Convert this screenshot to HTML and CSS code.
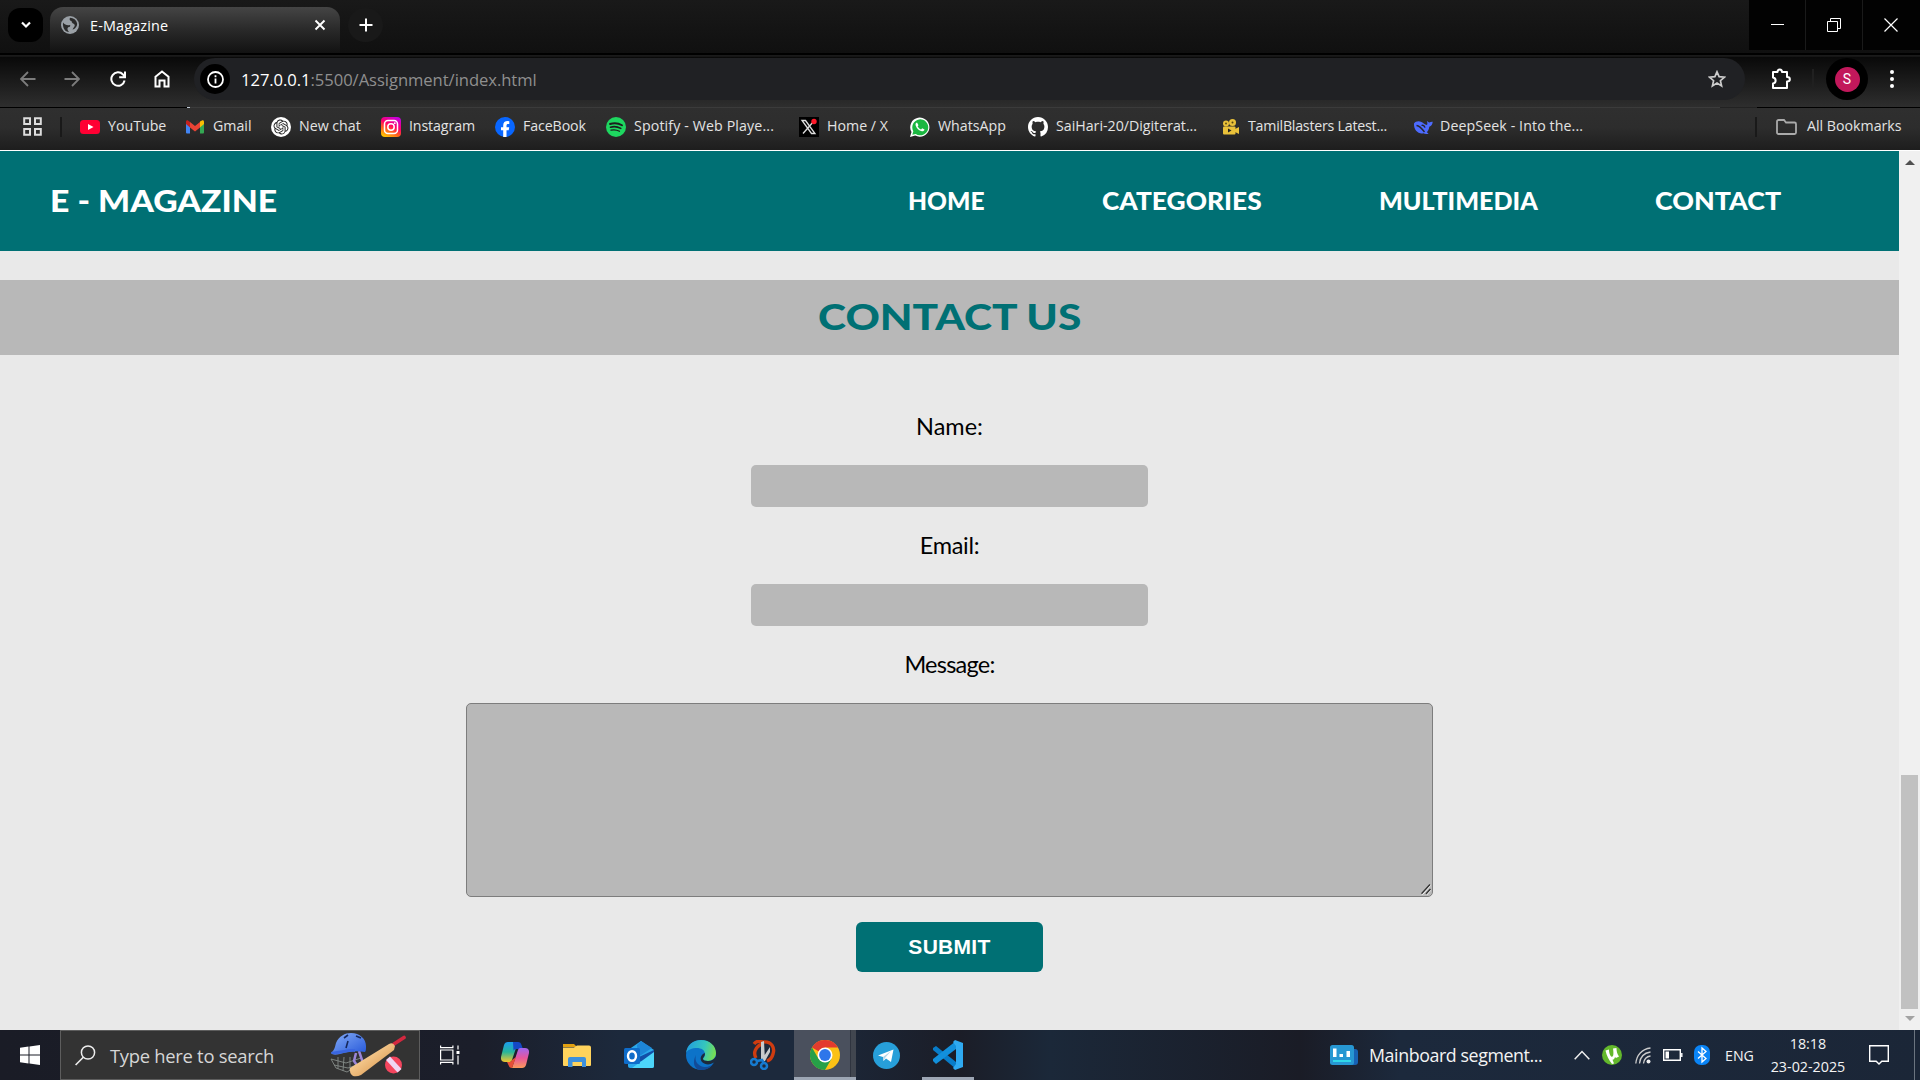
FILE: index.html
```html
<!DOCTYPE html>
<html lang="en">
<head>
<meta charset="utf-8">
<title>E-Magazine</title>
<link rel="stylesheet" href="styles.css">
</head>
<body>
<div class="screen">
  <div class="tabstrip">
    <div class="tab-search"><svg width="14" height="14" viewBox="0 0 14 14"><path d="M3 4.500l4 4 4-4" fill="none" stroke="#fff" stroke-width="2.200"/></svg></div>
    <div class="tab">
      <svg width="18" height="18" viewBox="0 0 18 18"><circle cx="9" cy="9" r="9" fill="#9aa0a6"/><path d="M2 6.500c2 2.500 4 3 7 2.500 1 1.500-1 2-2 2.500s-.500 3 1 4.500C4 16 1.500 12 2 6.500zM9 1.800c-1 2 0 3 1.500 3.200 0 2 2 2.500 3 3.500 1 1.500-1 3-2 5 3-.500 5-4 4.600-6C15.500 4 12.500 2 9 1.800z" fill="#2b2b2b"/></svg>
      <span class="tab-title">E-Magazine</span>
      <svg class="tab-close" width="12" height="12" viewBox="0 0 12 12"><path d="M1.500 1.500l9 9m0-9l-9 9" stroke="#fff" stroke-width="1.900"/></svg>
    </div>
    <div class="new-tab"><svg width="14" height="14" viewBox="0 0 14 14"><path d="M7 .5v13M.5 7h13" stroke="#fff" stroke-width="2"/></svg></div>
    <div class="window-controls">
      <div><svg width="13" height="13" viewBox="0 0 13 13"><path d="M0 5.500h13" stroke="#fff"/></svg></div>
      <div><svg width="14" height="14" viewBox="0 0 14 14"><path d="M.5 3.500h10v10H.5zM3.500 3V.5h10v10H11" fill="none" stroke="#fff"/></svg></div>
      <div><svg width="14" height="14" viewBox="0 0 14 14"><path d="M.5.5l13 13m0-13l-13 13" stroke="#fff" stroke-width="1.200"/></svg></div>
    </div>
  </div>

  <div class="toolbar">
    <div class="nav-btn"><svg width="16" height="16" viewBox="0 0 16 16" fill="none" stroke="#7c7c7c" stroke-width="1.800"><path d="M15.500 8H1.500M8 1L1 8l7 7"/></svg></div>
    <div class="nav-btn"><svg width="16" height="16" viewBox="0 0 16 16" fill="none" stroke="#7c7c7c" stroke-width="1.800"><path d="M.5 8h14M8 1l7 7-7 7"/></svg></div>
    <div class="nav-btn"><svg width="16" height="16" viewBox="0 0 16 16" fill="none" stroke="#fff" stroke-width="2"><path d="M14.600 9.500A6.700 6.700 0 1 1 13 3.500L14.500 5M15 .5v5.800H9.200"/></svg></div>
    <div class="nav-btn"><svg width="16" height="18" viewBox="0 0 16 18" fill="none" stroke="#fff" stroke-width="2"><path d="M1.500 6.800L8 1.500l6.500 5.300V16.500H10.500V10.500h-5v6h-4z"/></svg></div>
    <div class="omnibox">
      <div class="site-info"><svg width="17" height="17" viewBox="0 0 17 17"><circle cx="8.500" cy="8.500" r="7.500" fill="none" stroke="#fff" stroke-width="1.800"/><path d="M8.500 7.500v5M8.500 4.300v2" stroke="#fff" stroke-width="1.800"/></svg></div>
      <div class="url"><b>127.0.0.1</b>:5500/Assignment/index.html</div>
      <svg class="star" width="18" height="18" viewBox="0 0 18 18"><path d="M9 1.800l2.100 4.900 5.300.5-4 3.500 1.200 5.200L9 13.100l-4.600 2.800 1.200-5.200-4-3.500 5.300-.5z" fill="none" stroke="#ccc" stroke-width="1.700"/></svg>
    </div>
    <div class="tool-right">
      <svg class="ext" width="22" height="22" viewBox="0 0 22 22"><path d="M3 4h4.500c0-3.500 4.500-3.500 4.500 0H17v5c3.800 0 3.800 4.500 0 4.500V20H3v-4.500c3.500-.5 3.500-5.500 0-6z" fill="none" stroke="#fff" stroke-width="2" stroke-linejoin="round"/></svg>
      <i class="divider"></i>
      <div class="profile"><span>S</span></div>
      <svg class="menu" width="4" height="18" viewBox="0 0 4 18" fill="#fff"><circle cx="2" cy="2" r="2"/><circle cx="2" cy="9" r="2"/><circle cx="2" cy="16" r="2"/></svg>
    </div>
  </div>

  <div class="bookmarks">
    <svg class="apps" width="19" height="19" viewBox="0 0 19 19"><path d="M1.200 1.200H7V7H1.200zM12 1.200h5.800V7H12zM1.200 12H7v5.800H1.200zM12 12h5.800v5.800H12z" fill="none" stroke="#ddd" stroke-width="2"/></svg>
    <i class="bar"></i>
    <div class="bm-list">
      <div class="bm"><svg viewBox="0 0 20 20"><rect y="3" width="20" height="14" rx="3.500" fill="#ff0033"/><path d="M8 7l5.500 3L8 13z" fill="#fff"/></svg><span>YouTube</span></div>
      <div class="bm"><svg viewBox="0 0 20 20"><path d="M1 6v9.500a1 1 0 0 0 1 1h3V8z" fill="#4285f4"/><path d="M15 8v8.500h3a1 1 0 0 0 1-1V6z" fill="#34a853"/><path d="M15 4.500L17 3.500c1-.5 2 .2 2 1.500v2l-4 3.500z" fill="#fbbc04"/><path d="M5 5l5 4 5-4v5.500l-5 4-5-4z" fill="#ea4335"/><path d="M1 7V5c0-1.300 1-2 2-1.500L5 5v5.500z" fill="#c5221f"/></svg><span>Gmail</span></div>
      <div class="bm"><svg viewBox="0 0 20 20"><circle cx="10" cy="10" r="10" fill="#fff"/><path transform="translate(2.500 2.500) scale(.625)" fill="#222" d="M22.2819 9.8211a5.9847 5.9847 0 0 0-.5157-4.9108 6.0462 6.0462 0 0 0-6.5098-2.9A6.0651 6.0651 0 0 0 4.9807 4.1818a5.9847 5.9847 0 0 0-3.9977 2.9 6.0462 6.0462 0 0 0 .7427 7.0966 5.98 5.98 0 0 0 .511 4.9107 6.051 6.051 0 0 0 6.5146 2.9001A5.9847 5.9847 0 0 0 13.2599 24a6.0557 6.0557 0 0 0 5.7718-4.2058 5.9894 5.9894 0 0 0 3.9977-2.9001 6.0557 6.0557 0 0 0-.7475-7.0729zm-9.022 12.6081a4.4755 4.4755 0 0 1-2.8764-1.0408l.1419-.0804 4.7783-2.7582a.7948.7948 0 0 0 .3927-.6813v-6.7369l2.02 1.1686a.071.071 0 0 1 .038.052v5.5826a4.504 4.504 0 0 1-4.4945 4.4944zm-9.6607-4.1254a4.4708 4.4708 0 0 1-.5346-3.0137l.142.0852 4.783 2.7582a.7712.7712 0 0 0 .7806 0l5.8428-3.3685v2.3324a.0804.0804 0 0 1-.0332.0615L9.74 19.9502a4.4992 4.4992 0 0 1-6.1408-1.6464zM2.3408 7.8956a4.485 4.485 0 0 1 2.3655-1.9728V11.6a.7664.7664 0 0 0 .3879.6765l5.8144 3.3543-2.0201 1.1685a.0757.0757 0 0 1-.071 0l-4.8303-2.7865A4.504 4.504 0 0 1 2.3408 7.872zm16.5963 3.8558L13.1038 8.364 15.1192 7.2a.0757.0757 0 0 1 .071 0l4.8303 2.7913a4.4944 4.4944 0 0 1-.6765 8.1042v-5.6772a.79.79 0 0 0-.407-.667zm2.0107-3.0231l-.142-.0852-4.7735-2.7818a.7759.7759 0 0 0-.7854 0L9.409 9.2297V6.8974a.0662.0662 0 0 1 .0284-.0615l4.8303-2.7866a4.4992 4.4992 0 0 1 6.6802 4.66zM8.3065 12.863l-2.02-1.1638a.0804.0804 0 0 1-.038-.0567V6.0742a4.4992 4.4992 0 0 1 7.3757-3.4537l-.142.0805L8.704 5.459a.7948.7948 0 0 0-.3927.6813zm1.0976-2.3654l2.602-1.4998 2.6069 1.4998v2.9994l-2.5974 1.4997-2.6067-1.4997Z"/></svg><span>New chat</span></div>
      <div class="bm"><svg viewBox="0 0 20 20"><defs><linearGradient id="ig" x1="0.200" y1="1" x2="0.700" y2="0"><stop offset="0" stop-color="#ffc800"/><stop offset=".35" stop-color="#ff5a20"/><stop offset=".6" stop-color="#ff0169"/><stop offset="1" stop-color="#c800dc"/></linearGradient></defs><rect width="20" height="20" rx="4" fill="url(#ig)"/><g fill="none" stroke="#fff" stroke-width="1.500"><rect x="3.500" y="3.500" width="13" height="13" rx="3.500"/><circle cx="10" cy="10" r="3.200"/></g><circle cx="13.800" cy="6.200" r=".9" fill="#fff"/></svg><span>Instagram</span></div>
      <div class="bm"><svg viewBox="0 0 20 20"><circle cx="10" cy="10" r="10" fill="#0866ff"/><path d="M8.200 20v-6.700H6V10.200h2.200V8.800c0-3.300 1.600-4.700 4.600-4.700l1.500.2v2.800h-1.100c-1.300 0-1.700.5-1.700 1.700v1.400h2.700l-.5 3.100h-2.200V20z" fill="#fff"/></svg><span>FaceBook</span></div>
      <div class="bm"><svg viewBox="0 0 20 20"><circle cx="10" cy="10" r="10" fill="#1ed760"/><g fill="none" stroke="#1d1d1d" stroke-linecap="round"><path d="M4 7c4-1.200 8.500-.8 12 1.200" stroke-width="1.900"/><path d="M4.500 10.200c3.500-1 7-.6 10.300 1.200" stroke-width="1.600"/><path d="M5 13.200c3-.7 5.800-.4 8.500 1.100" stroke-width="1.300"/></g></svg><span>Spotify - Web Playe...</span></div>
      <div class="bm"><svg viewBox="0 0 20 20"><rect width="20" height="20" fill="#000"/><path d="M3 3.500h3.500l9.500 13h-3.500zM15 4L4 16.500" fill="none" stroke="#ddd" stroke-width="1.300"/><circle cx="15" cy="4.500" r="2.700" fill="#ff1a2a"/></svg><span>Home / X</span></div>
      <div class="bm"><svg viewBox="0 0 20 20"><path d="M0 20l1.500-5A9.600 9.600 0 1 1 5.200 18.600z" fill="#fff"/><path d="M2.300 17.800l1-3.500A8 8 0 1 1 5.800 17z" fill="#1bb741"/><path d="M7 5.500c-1.200.4-1.700 1.600-1.300 3 .8 2.800 3.200 5.200 6.100 5.800 1.300.2 2.500-.5 2.700-1.800l-2.300-1.200-1.100 1.200c-1.600-.6-2.800-1.700-3.500-3.300l.9-1z" fill="#fff"/></svg><span>WhatsApp</span></div>
      <div class="bm"><svg viewBox="0 0 16 16"><path fill="#fff" d="M8 0C3.580 0 0 3.580 0 8c0 3.540 2.290 6.530 5.470 7.590.4.070.55-.17.55-.38 0-.19-.01-.82-.01-1.490-2.010.37-2.530-.49-2.690-.94-.09-.23-.48-.94-.82-1.130-.28-.15-.68-.52-.01-.53.63-.01 1.080.58 1.230.82.72 1.210 1.870.87 2.330.66.070-.52.280-.87.510-1.070-1.780-.2-3.640-.89-3.640-3.950 0-.87.310-1.590.82-2.150-.08-.2-.36-1.020.080-2.120 0 0 .67-.21 2.200.82.640-.18 1.320-.27 2-.27s1.360.090 2 .27c1.530-1.040 2.200-.82 2.200-.82.440 1.100.16 1.920.080 2.120.51.560.82 1.270.82 2.150 0 3.070-1.870 3.750-3.650 3.950.29.250.54.730.54 1.480 0 1.070-.01 1.930-.01 2.200 0 .21.15.46.55.38A8.010 8.010 0 0 0 16 8c0-4.420-3.580-8-8-8z"/></svg><span>SaiHari-20/Digiterat...</span></div>
      <div class="bm"><svg viewBox="0 0 20 20"><g fill="#e9c13a"><circle cx="6" cy="6.500" r="3"/><circle cx="12.500" cy="5.500" r="3.500"/><rect x="3" y="9.500" width="12.500" height="8" rx="1"/><path d="M15 12l4-2v7l-4-2z"/></g><path d="M8 11.500l3.500 2L8 15.500z" fill="#222"/><circle cx="12.500" cy="5.500" r="1" fill="#554410"/><circle cx="6" cy="6.500" r=".9" fill="#554410"/></svg><span>TamilBlasters Latest...</span></div>
      <div class="bm"><svg viewBox="0 0 20 20"><path d="M1 6.500c1.500-2.500 5-2.700 7.500-1.500 2 .9 3 2.700 5.500 3 .8-1.200.2-2.800-.2-4.300 1.200 1 1.800 1.500 2.600 1.700 1-.2 2-.8 3.300-.6-.2 2.700-1.300 4.300-3.400 5-.3 2.500-1.300 4.200-2.500 5.400l1.800 1.300c-2 1-3.700.6-5.300-.2C5.500 17.500.5 13 1 6.500z" fill="#4d6bfe"/><path d="M3.500 8.500c3 .3 5 2.500 8 6.500M8.500 8.500c1.500-.8 3 .3 3.500 2.200" stroke="#26272c" stroke-width="1.300" fill="none"/></svg><span>DeepSeek - Into the...</span></div>
    </div>
    <i class="bar"></i>
    <div class="all-bm"><svg width="21" height="16" viewBox="0 0 21 16"><path d="M1 2.500A1.500 1.500 0 0 1 2.500 1H8l2 2.500h8.500A1.500 1.500 0 0 1 20 5v8.500a1.500 1.500 0 0 1-1.500 1.500h-16A1.500 1.500 0 0 1 1 13.500z" fill="none" stroke="#aaa" stroke-width="1.800"/></svg><span>All Bookmarks</span></div>
  </div>

  <div class="viewport">
    <div class="page">
      <header class="site-header">
        <div class="brand">E - MAGAZINE</div>
        <nav class="site-nav">
          <a class="nav-home"><span>HOME</span></a>
          <a class="nav-categories"><span>CATEGORIES</span></a>
          <a class="nav-multimedia"><span>MULTIMEDIA</span></a>
          <a class="nav-contact"><span>CONTACT</span></a>
        </nav>
      </header>
      <h1 class="section-title"><span>CONTACT US</span></h1>
      <form class="contact-form">
        <label class="label-name">Name:</label>
        <div class="field"></div>
        <label class="label-email">Email:</label>
        <div class="field"></div>
        <label class="label-message">Message:</label>
        <div class="message"><svg width="10" height="11" viewBox="0 0 10 11"><path d="M1 10.500L9.500 1M5.500 10.500l4-4.500" stroke="#fff" stroke-width="1.500"/><path d="M.5 9.800L9 .5M5 10l4.500-5" stroke="#333" stroke-width="1.500"/></svg></div>
        <div class="submit">SUBMIT</div>
      </form>
    </div>
    <div class="scrollbar">
      <svg width="10" height="5" viewBox="0 0 10 5"><path d="M0 5l5-5 5 5z" fill="#505050"/></svg>
      <div class="thumb"></div>
      <svg width="10" height="5" viewBox="0 0 10 5"><path d="M0 0l5 5 5-5z" fill="#a3a3a3"/></svg>
    </div>
  </div>

  <div class="taskbar">
    <div class="start"><svg width="20" height="20" viewBox="0 0 20 20" fill="#fff"><path d="M0 2.700L8.500 1.500V9.500H0zM9.500 1.400L20 0v9.500H9.500zM0 10.500h8.500v8L0 17.300zM9.500 10.500H20V20L9.500 18.600z"/></svg></div>
    <div class="search">
      <svg width="21" height="21" viewBox="0 0 21 21"><circle cx="13" cy="7.500" r="6.600" fill="none" stroke="#eee" stroke-width="1.500"/><path d="M8.300 12.200L.6 20" stroke="#eee" stroke-width="1.600"/></svg>
      <span>Type here to search</span>
      <svg class="cricket" width="76" height="44" viewBox="0 0 76 44">
        <defs><linearGradient id="hel" x1="0" x2="1" y2="1"><stop offset="0" stop-color="#86aef8"/><stop offset="1" stop-color="#2456d8"/></linearGradient><linearGradient id="bat" x1="0" y1="0" x2="1" y2="1"><stop offset=".3" stop-color="#f9d096"/><stop offset="1" stop-color="#cf873c"/></linearGradient></defs>
        <path d="M1 26l5 9 11 4 12-7M1 26l15 4 15-5M4 32l14 3 12-4M8 24v12M14 24l-1 14M20 24v14" fill="none" stroke="#858b88" stroke-width=".9"/>
        <path d="M29 18l4 12M26 20l-2 8 4 6" stroke="#9b86d8" stroke-width="2.500" fill="none"/>
        <path d="M1 20C5 17 5 13 6 10 9 3 15 0 21 0c9 0 15 6 15 13 0 3 0 5-1 6-10-2-18 0-25 2-4 1-8 1-9-1z" fill="url(#hel)"/>
        <path d="M1 19c8-1 15-3 24-3v3C17 18 9 22 2 21z" fill="#3a66e0"/><path d="M14 5l4-3M26 3l5 2M16 15l2-7" stroke="#15285c" stroke-width="1.600"/>
        <path d="M64 11L74 4.500" stroke="#d3283f" stroke-width="3.600" stroke-linecap="round"/>
        <path d="M20 35L59 11q4-2 6 2l-1 4L31 42q-4 2-8 1-4-3-3-8z" fill="url(#bat)"/>
        <circle cx="63.500" cy="32" r="8.500" fill="#f4455e"/><path d="M56 27l4-3.500L71.500 36l-4 3.500z" fill="#efd5f4"/>
      </svg>
    </div>
    <div class="task-view"><svg width="20" height="20" viewBox="0 0 20 20" fill="none" stroke="#fff" stroke-width="1.200"><path d="M.6 5h12.300v10H.6zM.6 .5V2.600h12.300V.5M.6 19.500v-2.100h12.300v2.100M18 .5v4M18 10.500v9"/><path d="M16.500 6h3v3h-3z" fill="#fff" stroke="none"/></svg></div>
    <div class="pins">
      <div class="pin"><svg width="28" height="26" viewBox="0 0 28 26"><defs><linearGradient id="c1" x2="0" y2="1"><stop offset="0" stop-color="#1b9cf0"/><stop offset=".5" stop-color="#26b59a"/><stop offset="1" stop-color="#f4c72c"/></linearGradient><linearGradient id="c2" x2="0" y2="1"><stop offset="0" stop-color="#a066f0"/><stop offset=".5" stop-color="#e8569b"/><stop offset="1" stop-color="#fb9a5a"/></linearGradient></defs><path d="M7 0h10L11 18c-.5 1.500-1.500 2-3 2H4c-3 0-4.500-2-4-5L3 3c.6-2 2-3 4-3z" fill="url(#c1)"/><path d="M12 0h5c2 0 3 1 3.500 3L22 7h-6c-2 0-3 .5-3.500 2z" fill="#1548c5"/><path d="M21 26H11L17 8c.5-1.500 1.500-2 3-2h4c3 0 4.500 2 4 5l-3 12c-.6 2-2 3-4 3z" fill="url(#c2)"/><path d="M6 20h2c1.500 0 2.500-.5 3-2l4-3-4 11c-2 0-3-1-3.500-3z" fill="#e64f37"/></svg></div>
      <div class="pin"><svg width="28" height="24" viewBox="0 0 28 24"><path d="M0 1h11l3 3H0z" fill="#e2a011"/><path d="M0 4.500h11L14 2.500h12a2 2 0 0 1 2 2V22a1 1 0 0 1-1 1H1a1 1 0 0 1-1-1z" fill="#ffd35c"/><path d="M5 24v-8a2 2 0 0 1 2-2h14a2 2 0 0 1 2 2v8h-4v-5h-9.500v5z" fill="#3e90dc"/></svg></div>
      <div class="pin"><svg width="30" height="28" viewBox="0 0 30 28"><path d="M4 9L17 0l13 9v16a2 2 0 0 1-2 2H6a2 2 0 0 1-2-2z" fill="#2aa7ea"/><path d="M13 4l4-4 11 7-14 9z" fill="#1d86d8"/><path d="M30 9v8L15 21v-5z" fill="#124fa8"/><path d="M30 11v14a2 2 0 0 1-2 2H8z" fill="#4cd5fa"/><rect y="7" width="16" height="16" rx="1.500" fill="#0f6cc9"/><ellipse cx="8" cy="15" rx="4" ry="4.800" fill="none" stroke="#fff" stroke-width="2.400"/></svg></div>
      <div class="pin"><svg width="30" height="30" viewBox="0 0 30 30"><defs><linearGradient id="e1" x1="0" y1=".3" x2="1" y2=".5"><stop offset="0" stop-color="#229ee0"/><stop offset=".6" stop-color="#35c6bd"/><stop offset="1" stop-color="#78df51"/></linearGradient></defs><circle cx="15" cy="15" r="15" fill="#0c73c9"/><path d="M0 13C1 5 7 0 15 0c9 0 15 6 15 13 0 5-4 8-8 8-3 0-5-1-5-2s2-2 2-5c0-4-4-6-8-6C6 8 1 10 0 13z" fill="url(#e1)"/><path d="M10 15c-2 6 2 11 8 12 4 .5 7-1 9.500-3.500C24 29 19 30 15 30 8 30 6 22 10 15z" fill="#124b98"/><path d="M18.800 13c.6 3-1.800 4-1.800 6 0 1.200 2 2 5 2 4 0 6-2 8-4.500V22l-3 1c-3 2-8 2-11-1-2.500-3-1.500-7 2.800-9z" fill="#1d2a3c"/></svg></div>
      <div class="pin"><svg width="26" height="30" viewBox="0 0 26 30"><path d="M4 4c2-3 6-3 9-2 9-1 12 6 10 12-1 4-3 6-6 7M13 3C5 7 3 13 6 18" fill="none" stroke="#cf3c10" stroke-width="3.400"/><path d="M11 2l3-1 1 20h-4zM14 16l6-9v5l-5 9z" fill="#c7cacc"/><g fill="none" stroke="#167bd0" stroke-width="2.500"><circle cx="4" cy="22" r="3"/><circle cx="14" cy="26" r="3"/><path d="M7 21l5-1 2 3"/></g></svg></div>
      <div class="pin active"><svg width="30" height="30" viewBox="0 0 30 30"><circle cx="15" cy="15" r="15" fill="#fbc116"/><path d="M15 15L2 7.500A15 15 0 0 1 28 7.500H15z" fill="#e33b2e"/><path d="M2 7.500A15 15 0 0 0 15 30l6.500-11.300L8.500 18.700z" fill="#26a048"/><circle cx="15" cy="15" r="7.500" fill="#fff"/><circle cx="15" cy="15" r="5.900" fill="#2e76ea"/></svg></div>
      <div class="pin"><svg width="27" height="27" viewBox="0 0 27 27"><circle cx="13.500" cy="13.500" r="13.500" fill="#279fd9"/><path d="M5 13.500L20.500 7.500 18 20l-5-3.500-2.500 2.500-.5-4z" fill="#fff"/><path d="M10 15l8-6-6 7-1.500 3z" fill="#b5d7e9"/></svg></div>
      <div class="pin running"><svg width="30" height="30" viewBox="0 0 30 30"><path d="M0 8l3-2 20 16v7L0 10z" fill="#087cc8"/><path d="M0 21l3 3L23 9V1L0 19z" fill="#1290dc"/><path d="M22 0l8 3v24l-8 3-2-2 3-4V6l-3-4z" fill="#2faaf1"/></svg></div>
    </div>
    <div class="tray">
      <div class="news"><svg width="28" height="21" viewBox="0 0 28 21"><rect x="18" y="4" width="10" height="16" rx="3" fill="#1762b4"/><rect width="24" height="20" rx="2.500" fill="#2797d2"/><path d="M3 3.500h3.500V12H3zM9.500 9H13v3H9.500zM16.500 6H20v6h-3.500z" fill="#fff"/><path d="M3 15h18v2H3z" fill="#30d8e8"/></svg><span>Mainboard segment...</span></div>
      <svg class="chev" width="16" height="10" viewBox="0 0 16 10"><path d="M.7 9.200L8 1.500l7.300 7.700" fill="none" stroke="#eee" stroke-width="1.500"/></svg>
      <svg class="ut" width="20" height="20" viewBox="0 0 20 20"><circle cx="10" cy="10" r="10" fill="#63b82c"/><path d="M3.500 5.500L7 4.500c0 3 1 6.500 2.800 7.300C12 12 11.500 7 11 3.500l3.500-.5c0 3 .5 6 2.500 8.500l-3 1.500-1-1c-.3 1.500-1 2.500-2.500 2.700L12 18.500l-2 .5C7 15 4.500 10.500 3.500 5.500z" fill="#fff"/></svg>
      <svg class="wifi" width="16" height="17" viewBox="0 0 16 17"><g fill="none" stroke="#ccc" stroke-width="1.300"><path d="M.8 16.500C1.500 8 7 2 15.500 1M4.500 16.500C5 10.500 9 6 15.500 5M8.500 16.500c.5-4 3-7 7-7.500"/></g><circle cx="13.500" cy="14.500" r="2" fill="#eee"/></svg>
      <svg class="batt" width="20" height="12" viewBox="0 0 20 12"><path d="M.7.700h16.600v10.600H.7zM18.800 4v4" fill="none" stroke="#fff" stroke-width="1.400"/><path d="M2.500 2.500H6v7H2.500z" fill="#fff"/></svg>
      <svg class="bt" width="16" height="20" viewBox="0 0 16 20"><rect width="16" height="20" rx="7" fill="#0a84f5"/><path d="M4 6.500l8 7L8 17V3l4 3.500-8 7" fill="none" stroke="#fff" stroke-width="1.300"/></svg>
      <span class="lang">ENG</span>
      <div class="clock"><span>18:18</span><span>23-02-2025</span></div>
      <svg class="notif" width="20" height="20" viewBox="0 0 20 20"><path d="M.7.700h18.600v15.600h-6.500L10 19l-2.800-2.700H.7z" fill="none" stroke="#fff" stroke-width="1.400"/></svg>
    </div>
  </div>
</div>
</body>
</html>
```
FILE: styles.css
```css
* { box-sizing: border-box; }
body { margin: 0; background: #111; font-family: "Open Sans", "Noto Sans", sans-serif; }
svg { display: block; flex: none; }
.screen { width: 1920px; height: 1080px; display: flex; flex-direction: column; overflow: hidden; }

/* Browser tabs */
.tabstrip { height: 57px; display: flex; align-items: flex-start; padding-left: 8px; background: linear-gradient(#191919, #101010 53px, #000 53px, #000 55px, #1c1c1c 55px, #141414); }
.tab-search { width: 35px; height: 34px; margin-top: 8px; border-radius: 12px; background: #000; display: flex; align-items: center; justify-content: center; }
.tab { width: 290px; height: 46px; margin: 7px 0 0 7px; padding: 0 14px 10px 11px; border-radius: 13px 13px 0 0; background: linear-gradient(#454545, #292929 50%, #121212); display: flex; align-items: center; }
.tab-title { margin-left: 11px; font-size: 14.400px; letter-spacing: .15px; color: #fff; }
.tab-close { margin-left: auto; }
.new-tab { width: 35px; height: 34px; margin: 8px 0 0 8px; border-radius: 17px; background: #191919; display: flex; align-items: center; justify-content: center; }
.window-controls { margin-left: auto; display: flex; gap: 1px; background: #1a1a1a; }
.window-controls div { width: 56px; height: 50px; background: #020202; display: flex; align-items: center; justify-content: center; }
.window-controls div:last-child { width: 57px; padding-right: 1px; }

/* Address bar */
.toolbar { height: 50px; display: flex; align-items: flex-start; padding: 1px 0 0 6px; background: linear-gradient(#090909, #2e2e2e); }
.nav-btn { width: 44px; height: 42px; display: flex; align-items: center; justify-content: center; }
.nav-btn:nth-child(3) { margin-left: 2px; }
.omnibox { width: 1551px; height: 42px; margin-left: 10px; padding: 0 19px 0 6px; border-radius: 21px; background: #202124; display: flex; align-items: center; }
.site-info { width: 30px; height: 30px; border-radius: 50%; background: #000; display: flex; align-items: center; justify-content: center; }
.url { margin-left: 11px; font-size: 16.600px; letter-spacing: -.05px; color: #8f8f8f; }
.url b { font-weight: 400; color: #fff; }
.star { margin-left: auto; }
.tool-right { height: 42px; display: flex; align-items: center; }
.ext { margin-left: 25px; }
.divider { width: 2px; height: 20px; margin-left: 20px; background: #202020; }
.profile { width: 42px; height: 42px; margin-left: 12px; border-radius: 50%; background: #000; display: flex; align-items: center; justify-content: center; }
.profile span { width: 25px; height: 25px; border-radius: 50%; background: #c2185b; color: #fff; font: 14px/25px "Roboto", sans-serif; text-align: center; }
.menu { margin-left: 22px; }

/* Bookmarks */
.bookmarks { height: 44px; padding: 0 18px 6px 23px; display: flex; align-items: center; border-top: 1px solid #3a3a3a; border-image: linear-gradient(90deg, #000 188px, #c3cdd8 188px, #c3cdd8 191px, #3b3b3b 191px, #3b3b3b 1719px, #222 1719px, #222 1756px, #000 1756px) 1; background: linear-gradient(#2f2f2f, #2d2d2d 45%, #1d1d1d); box-shadow: inset 0 -1px #fff; color: #e3e3e3; font-size: 14.200px; white-space: nowrap; }
.bookmarks span { margin-top: -2px; }
.apps { margin-right: 18px; }
.bar { width: 2px; height: 20px; background: #191919; }
.bm-list { display: flex; margin-left: 18px; width: 1675px; }
.bm { display: flex; align-items: center; gap: 8px; }
.bm svg { width: 20px; height: 20px; }
.bm:nth-child(1) { width: 105px; }
.bm:nth-child(2) { width: 86px; }
.bm:nth-child(3) { width: 110px; }
.bm:nth-child(4) { width: 114px; letter-spacing: -.1px; }
.bm:nth-child(5) { width: 111px; letter-spacing: -.1px; }
.bm:nth-child(6) { width: 193px; letter-spacing: .13px; }
.bm:nth-child(7) { width: 111px; }
.bm:nth-child(8) { width: 118px; }
.bm:nth-child(9) { width: 192px; }
.bm:nth-child(10) { width: 193px; letter-spacing: -.22px; }
.bm:nth-child(11) { gap: 7px; letter-spacing: .1px; }
.all-bm { display: flex; align-items: center; gap: 10px; margin-left: 19px; }

/* Web page */
.viewport { height: 879px; display: flex; }
.page { width: 1899px; background: #e9e9e9; font-family: "Lato", "Liberation Sans", sans-serif; }
.site-header { height: 100px; padding: 0 118px 2px 50px; background: #007074; color: #fff; display: flex; align-items: center; justify-content: space-between; }
.brand { font-size: 29.500px; font-weight: 900; transform: scaleX(1.145); transform-origin: left; }
.site-nav { display: flex; gap: 117.500px; font-size: 24px; font-weight: 900; }
.site-nav span { display: inline-block; transform-origin: left; }
.nav-home { width: 76.500px; }
.nav-home span { transform: scaleX(1.025); }
.nav-categories { width: 160px; }
.nav-categories span { transform: scaleX(1.097); }
.nav-multimedia { width: 158.500px; }
.nav-multimedia span { transform: scaleX(1.045); }
.nav-contact { width: 126px; }
.nav-contact span { transform: scaleX(1.118); }
.section-title { height: 75px; margin: 29px 0 0; background: #b8b8b8; color: #007074; font-size: 36px; font-weight: 900; line-height: 73px; text-align: center; }
.section-title span { display: inline-block; transform: scaleX(1.178); }
.contact-form { display: flex; flex-direction: column; align-items: center; padding-top: 33px; }
.contact-form label { height: 77px; font-size: 23.500px; line-height: 77px; color: #000; }
.label-email { letter-spacing: -.3px; }
.label-message { letter-spacing: -.75px; }
.field { width: 397px; height: 42px; border-radius: 5px; background: #b8b8b8; }
.message { width: 967px; height: 194px; border: 1px solid #7d7d7d; border-radius: 5px; background: #b8b8b8; display: flex; align-items: flex-end; justify-content: flex-end; padding: 1px; }
.submit { width: 187px; height: 50px; margin-top: 25px; border-radius: 6px; background: #007074; color: #fff; font: bold 21px/50px "Liberation Sans", sans-serif; letter-spacing: .3px; text-align: center; }
.scrollbar { width: 21px; background: #f0f0f0; display: flex; flex-direction: column; align-items: center; padding: 9px 0; justify-content: flex-end; }
.scrollbar svg:first-child { margin-bottom: auto; }
.thumb { width: 17px; height: 234px; margin-bottom: 7px; background: #c1c1c1; }

/* Taskbar */
.taskbar { height: 50px; display: flex; background: linear-gradient(90deg, #1a1c26, #1b1e2a 480px, #1c293c 620px, #1c293c 800px, #1b1d27 960px, #1b2839 1050px, #1a1c26 1300px, #1c293c 1400px, #1b2637); color: #f4f4f4; }
.start { width: 60px; display: flex; align-items: center; justify-content: center; }
.search { width: 360px; padding: 0 13px 0 14px; border: 1px solid #5d5d5d; background: #333; display: flex; align-items: center; font-size: 18.400px; letter-spacing: -.28px; color: #d6d6d6; white-space: nowrap; }
.search span { margin-left: 14px; }
.cricket { margin-left: auto; }
.task-view { width: 64px; padding-left: 20px; display: flex; align-items: center; }
.pins { display: flex; }
.pin { width: 62px; display: flex; align-items: center; justify-content: center; }
.active { background: linear-gradient(90deg, #4a505d 56px, #2f343f 56px, #2f343f 57px, #41464f 57px); box-shadow: inset 0 -3px #9da6b4; }
.pin:nth-child(7) { width: 60px; }
.running { width: 52px; margin-left: 6px; box-shadow: inset 0 -3px #9da6b4; }
.tray { margin-left: auto; display: flex; align-items: center; width: 590px; white-space: nowrap; }
.news { display: flex; align-items: center; width: 244px; gap: 11px; font-size: 17.800px; letter-spacing: -.4px; }
.ut { margin-left: 12px; }
.wifi { margin-left: 13px; }
.batt { margin-left: 12px; }
.bt { margin-left: 11px; }
.lang { margin-left: 15px; width: 45px; font-size: 14.200px; }
.clock { width: 76px; display: flex; flex-direction: column; align-items: center; font-size: 14.300px; line-height: 23px; }
.notif { margin-left: 23px; }
.tray::after { content: ""; width: 1px; height: 50px; margin-left: 25px; background: #6b747f; }
```
